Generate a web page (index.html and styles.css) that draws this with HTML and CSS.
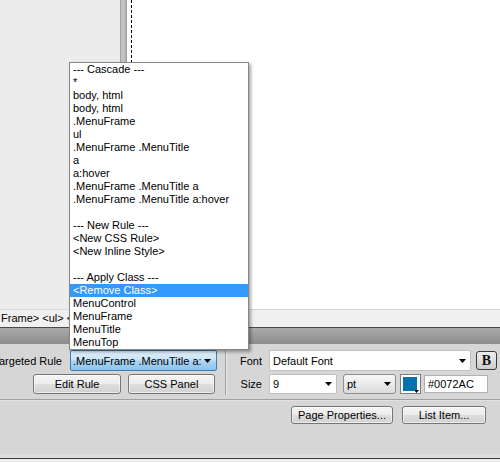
FILE: index.html
```html
<!DOCTYPE html>
<html>
<head>
<meta charset="utf-8">
<link rel="stylesheet" href="styles.css">
</head>
<body>
<div class="app">
  <div class="workspace">
    <div class="side-panel"></div>
    <div class="scroll-strip"></div>
    <div class="canvas"><div class="dash"></div></div>
  </div>
  <div class="tagbar">Frame&gt; &lt;ul&gt; &lt;div&gt; &lt;a&gt;</div>
  <div class="props-header"></div>
  <div class="props">
    <div class="props-top">
      <div class="css-group">
        <div class="row">
          <span class="target-label">Targeted Rule</span>
          <div class="select select-target">
            <span class="select-text">.MenuFrame .MenuTitle a:hover</span>
            <svg class="arrow" width="7" height="4" viewBox="0 0 7 4"><path d="M0 0H7L3.5 4Z" fill="#000"/></svg>
          </div>
        </div>
        <div class="row btn-row">
          <button class="btn btn-edit">Edit Rule</button>
          <button class="btn btn-css">CSS Panel</button>
        </div>
      </div>
      <div class="vsep"></div>
      <div class="font-group">
        <div class="row">
          <span class="flabel">Font</span>
          <div class="select select-font">
            <span class="select-text">Default Font</span>
            <svg class="arrow" width="7" height="4" viewBox="0 0 7 4"><path d="M0 0H7L3.5 4Z" fill="#000"/></svg>
          </div>
          <button class="bold-btn">B</button>
        </div>
        <div class="row row2">
          <span class="flabel">Size</span>
          <div class="select select-size">
            <span class="select-text">9</span>
            <svg class="arrow" width="7" height="4" viewBox="0 0 7 4"><path d="M0 0H7L3.5 4Z" fill="#000"/></svg>
          </div>
          <div class="select select-unit">
            <span class="select-text">pt</span>
            <svg class="arrow" width="7" height="4" viewBox="0 0 7 4"><path d="M0 0H7L3.5 4Z" fill="#000"/></svg>
          </div>
          <div class="swatch">
            <span class="swatch-color"></span>
            <svg class="swatch-arrow" width="5" height="3" viewBox="0 0 5 3"><path d="M0 0H5L2.5 3Z" fill="#000"/></svg>
          </div>
          <div class="hex-input">#0072AC</div>
        </div>
      </div>
    </div>
    <div class="hsep"></div>
    <div class="props-bottom">
      <button class="btn btn-page">Page Properties...</button>
      <button class="btn btn-list">List Item...</button>
    </div>
  </div>
  <div class="footer-strip"></div>

  <ul class="dropdown">
    <li>--- Cascade ---</li>
    <li>*</li>
    <li>body, html</li>
    <li>body, html</li>
    <li>.MenuFrame</li>
    <li>ul</li>
    <li>.MenuFrame .MenuTitle</li>
    <li>a</li>
    <li>a:hover</li>
    <li>.MenuFrame .MenuTitle a</li>
    <li>.MenuFrame .MenuTitle a:hover</li>
    <li class="blank"></li>
    <li>--- New Rule ---</li>
    <li>&lt;New CSS Rule&gt;</li>
    <li>&lt;New Inline Style&gt;</li>
    <li class="blank"></li>
    <li>--- Apply Class ---</li>
    <li class="selected">&lt;Remove Class&gt;</li>
    <li>MenuControl</li>
    <li>MenuFrame</li>
    <li>MenuTitle</li>
    <li>MenuTop</li>
  </ul>
</div>
</body>
</html>
```

FILE: styles.css
```css
* { box-sizing: border-box; }
html, body {
  margin: 0;
  padding: 0;
  width: 500px;
  height: 462px;
  overflow: hidden;
}
body {
  font-family: "Liberation Sans", Arial, sans-serif;
  font-size: 11px;
  color: #000;
}
.app {
  position: relative;
  width: 500px;
  height: 462px;
  display: flex;
  flex-direction: column;
}
.workspace {
  height: 309px;
  display: flex;
}
.side-panel {
  width: 120px;
  background: #ececec;
}
.scroll-strip {
  width: 7px;
  background: linear-gradient(to right, #9a9a9a 0, #bdbdbd 20%, #c6c6c6 50%, #b4b4b4 80%, #909090 100%);
}
.canvas {
  flex: 1;
  background: #fff;
  display: flex;
}
.dash {
  width: 1px;
  margin-left: 4px;
  background: repeating-linear-gradient(to bottom, #000 0, #000 3px, transparent 3px, transparent 5px);
}
.tagbar {
  height: 18px;
  background: #f0f0f0;
  border-top: 1px solid #d8d8d8;
  padding-left: 1px;
  line-height: 16px;
  white-space: nowrap;
  overflow: hidden;
}
.props-header {
  height: 17px;
  border-top: 1px solid #4a4a4a;
  background: linear-gradient(to bottom, #a9a9a9, #8c8c8c);
}
.props {
  height: 110px;
  background: #d6d6d6;
  padding-top: 6px;
  display: flex;
  flex-direction: column;
}
.props-top {
  display: flex;
  height: 44px;
}
.css-group {
  width: 225px;
  display: flex;
  flex-direction: column;
  gap: 2px;
}
.row {
  display: flex;
  align-items: center;
  height: 21px;
}
.target-label {
  width: 62px;
  text-align: right;
  white-space: nowrap;
  direction: rtl;
  overflow: visible;
  margin-right: 8px;
}
.select {
  display: flex;
  align-items: center;
  height: 21px;
  border: 1px solid #c0c0c0;
  border-radius: 2px;
  background: #fff;
  padding-left: 2px;
}
.select-text {
  flex: 1;
  overflow: hidden;
  white-space: nowrap;
}
.select .arrow {
  margin: 0 4px 0 3px;
  flex: none;
}
.select-target {
  width: 147px;
  border-color: #3c7fb1;
  background: linear-gradient(to bottom, #e2f1fc 0%, #c8e4f8 45%, #a9d3f1 55%, #8cc4ec 100%);
}
.select-target .select-text {
  max-width: 128px;
  text-overflow: clip;
}
.btn-row {
  padding-left: 33px;
  gap: 7px;
}
.btn {
  font-family: "Liberation Sans", Arial, sans-serif;
  font-size: 11px;
  color: #000;
  height: 20px;
  padding: 0;
  border: 1px solid #767676;
  border-radius: 3px;
  background: linear-gradient(to bottom, #f4f4f4 0%, #ececec 50%, #dedede 50%, #d2d2d2 100%);
  box-shadow: inset 0 0 0 1px rgba(255,255,255,0.6);
}
.btn-edit { width: 88px; }
.btn-css { width: 87px; }
.vsep {
  width: 2px;
  height: 45px;
  border-left: 1px solid #a0a0a0;
  border-right: 1px solid #ececec;
}
.font-group {
  padding-left: 5px;
  display: flex;
  flex-direction: column;
  gap: 2px;
}
.flabel {
  width: 30px;
  text-align: right;
  margin-right: 7px;
}
.select-font {
  width: 202px;
  padding-left: 3px;
}
.select-font .arrow { margin-right: 4px; }
.bold-btn {
  margin-left: 5px;
  width: 21px;
  height: 19px;
  padding: 0;
  border: 1px solid #3c3c3c;
  border-radius: 3px;
  background: linear-gradient(to bottom, #eeeeee, #cdcdcd);
  font-family: "Liberation Serif", "Times New Roman", serif;
  font-weight: bold;
  font-size: 14px;
  line-height: 16px;
  color: #111;
}
.row2 .select { height: 20px; }
.select-size {
  width: 68px;
  padding-left: 3px;
}
.select-unit {
  width: 53px;
  margin-left: 6px;
  border-color: #8e8e8e;
  border-radius: 3px;
  background: linear-gradient(to bottom, #f8f8f8, #dcdcdc);
  padding-left: 3px;
}
.swatch {
  position: relative;
  width: 21px;
  height: 20px;
  margin-left: 4px;
  border: 1px solid #7e7e7e;
  background: #fff;
  padding: 2px 3px 2px 2px;
}
.swatch-color {
  display: block;
  width: 100%;
  height: 100%;
  background: #0072ac;
}
.swatch-arrow {
  position: absolute;
  right: 1px;
  bottom: 0;
  background: #fff;
}
.hex-input {
  width: 64px;
  height: 18px;
  margin-left: 3px;
  border: 1px solid #b0b0b0;
  background: #fff;
  padding-left: 3px;
  line-height: 16px;
}
.hsep {
  margin-top: 5px;
  height: 2px;
  border-top: 1px solid #a0a0a0;
  border-bottom: 1px solid #e2e2e2;
}
.props-bottom {
  margin-top: 5px;
  padding-left: 291px;
  display: flex;
  gap: 9px;
}
.btn-page { width: 102px; height: 18px; }
.btn-list { width: 84px; height: 18px; }
.footer-strip {
  height: 8px;
  background: linear-gradient(to bottom, #dedede 0, #dedede 4px, #3a3a3a 4px, #3a3a3a 5px, #ececec 5px);
}
.dropdown {
  position: absolute;
  left: 69px;
  top: 62px;
  width: 180px;
  height: 288px;
  margin: 0;
  padding: 0;
  list-style: none;
  background: #fff;
  border: 1px solid #868686;
  box-shadow: 2px 2px 3px rgba(0,0,0,0.35);
}
.dropdown li {
  height: 13px;
  line-height: 13px;
  padding-left: 3px;
  white-space: nowrap;
}
.dropdown li.selected {
  background: #3399ff;
  color: #fff;
}
```
